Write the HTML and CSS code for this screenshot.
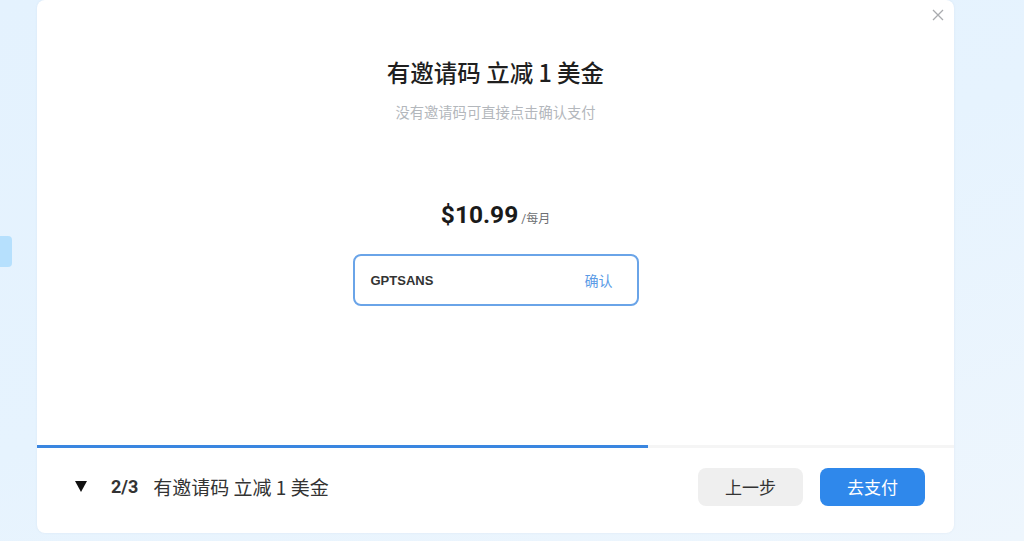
FILE: index.html
```html
<!DOCTYPE html>
<html lang="zh">
<head>
<meta charset="utf-8">
<link rel="stylesheet" href="styles.css">
</head>
<body>
<div class="page">
  <div class="side-tab"></div>
  <div class="modal">
    <button class="close" aria-label="close">
      <svg width="12" height="12" viewBox="0 0 12 12"><path d="M1 1L11 11M11 1L1 11" stroke="#a9abae" stroke-width="1.3" fill="none"/></svg>
    </button>
    <div class="content">
      <h1 class="title">有邀请码 立减 1 美金</h1>
      <p class="subtitle">没有邀请码可直接点击确认支付</p>
      <div class="price"><span class="amount">$10.99</span><span class="per">/每月</span></div>
      <div class="code-box">
        <span class="code">GPTSANS</span>
        <span class="confirm">确认</span>
      </div>
    </div>
    <div class="progress"><div class="progress-fill" style="width:66.6%"></div></div>
    <div class="footer">
      <div class="step">
        <span class="tri"></span>
        <span class="count">2/3</span>
        <span class="step-name">有邀请码 立减 1 美金</span>
      </div>
      <div class="actions">
        <button class="btn btn-prev">上一步</button>
        <button class="btn btn-pay">去支付</button>
      </div>
    </div>
  </div>
</div>
</body>
</html>
```

FILE: styles.css
```css
* { box-sizing: border-box; }
html, body { margin: 0; padding: 0; }
body {
  width: 1024px;
  height: 541px;
  overflow: hidden;
  font-family: Roboto, "Noto Sans CJK SC", sans-serif;
  background: linear-gradient(160deg, #e4f2fe 0%, #e6f3fe 50%, #eef6fd 100%);
}
.page {
  position: relative;
  height: 541px;
  display: flex;
  padding-left: 37px;
}
.side-tab {
  position: absolute;
  left: 0;
  top: 236px;
  width: 12px;
  height: 31px;
  background: #b6e0fd;
  border-radius: 0 4px 4px 0;
}
.modal {
  position: relative;
  width: 917px;
  height: 533px;
  background: #fff;
  border-radius: 8px;
  display: flex;
  flex-direction: column;
  box-shadow: 0 0 2px rgba(180, 200, 220, 0.3);
}
.close {
  position: absolute;
  top: 9px;
  right: 10px;
  border: 0;
  background: transparent;
  padding: 0;
  width: 12px;
  height: 12px;
  display: flex;
}
.content {
  height: 445px;
  display: flex;
  flex-direction: column;
  align-items: center;
  padding-top: 57px;
}
.title {
  margin: 0;
  font-family: "Noto Sans CJK SC", sans-serif;
  font-size: 23.5px;
  line-height: 30px;
  font-weight: 500;
  color: #1f1f1f;
}
.subtitle {
  margin: 15px 0 0;
  font-family: "Noto Sans CJK SC", sans-serif;
  font-size: 14.3px;
  line-height: 20px;
  color: #b3b7bc;
}
.price {
  margin-top: 76px;
  display: flex;
  align-items: baseline;
  gap: 3px;
  line-height: 34px;
}
.amount {
  font-family: Roboto, sans-serif;
  font-weight: 700;
  font-size: 24.5px;
  color: #1a1a1a;
}
.per {
  font-family: Roboto, "Noto Sans CJK SC", sans-serif;
  font-size: 12px;
  color: #6d6f73;
}
.code-box {
  margin-top: 18px;
  width: 286px;
  height: 52px;
  border: 2px solid #6aa4e8;
  border-radius: 8px;
  display: flex;
  align-items: center;
  justify-content: space-between;
  padding: 0 24px 0 16px;
}
.code {
  font-family: "Liberation Sans", Arial, sans-serif;
  font-weight: 700;
  font-size: 13px;
  color: #333;
}
.confirm {
  font-family: "Noto Sans CJK SC", sans-serif;
  font-size: 14px;
  color: #5b9be6;
}
.progress {
  height: 3px;
  background: #f5f5f5;
}
.progress-fill {
  height: 3px;
  background: #3a86e0;
}
.footer {
  flex: 1;
  display: flex;
  align-items: center;
  justify-content: space-between;
  padding: 0 29px 8px 38px;
}
.step {
  display: flex;
  align-items: center;
}
.tri {
  width: 0;
  height: 0;
  border-left: 6.5px solid transparent;
  border-right: 6.5px solid transparent;
  border-top: 11px solid #111;
  margin-right: 24px;
}
.count {
  font-family: Roboto, sans-serif;
  font-weight: 700;
  font-size: 18px;
  color: #333;
  margin-right: 15px;
}
.step-name {
  font-family: "Noto Sans CJK SC", sans-serif;
  font-size: 19px;
  color: #333;
}
.actions {
  display: flex;
  gap: 17px;
}
.btn {
  width: 105px;
  height: 38px;
  border: 0;
  border-radius: 8px;
  font-family: "Noto Sans CJK SC", sans-serif;
  font-size: 17px;
  cursor: pointer;
}
.btn-prev {
  background: #efefef;
  color: #333;
}
.btn-pay {
  background: #2f88eb;
  color: #fff;
}
```
